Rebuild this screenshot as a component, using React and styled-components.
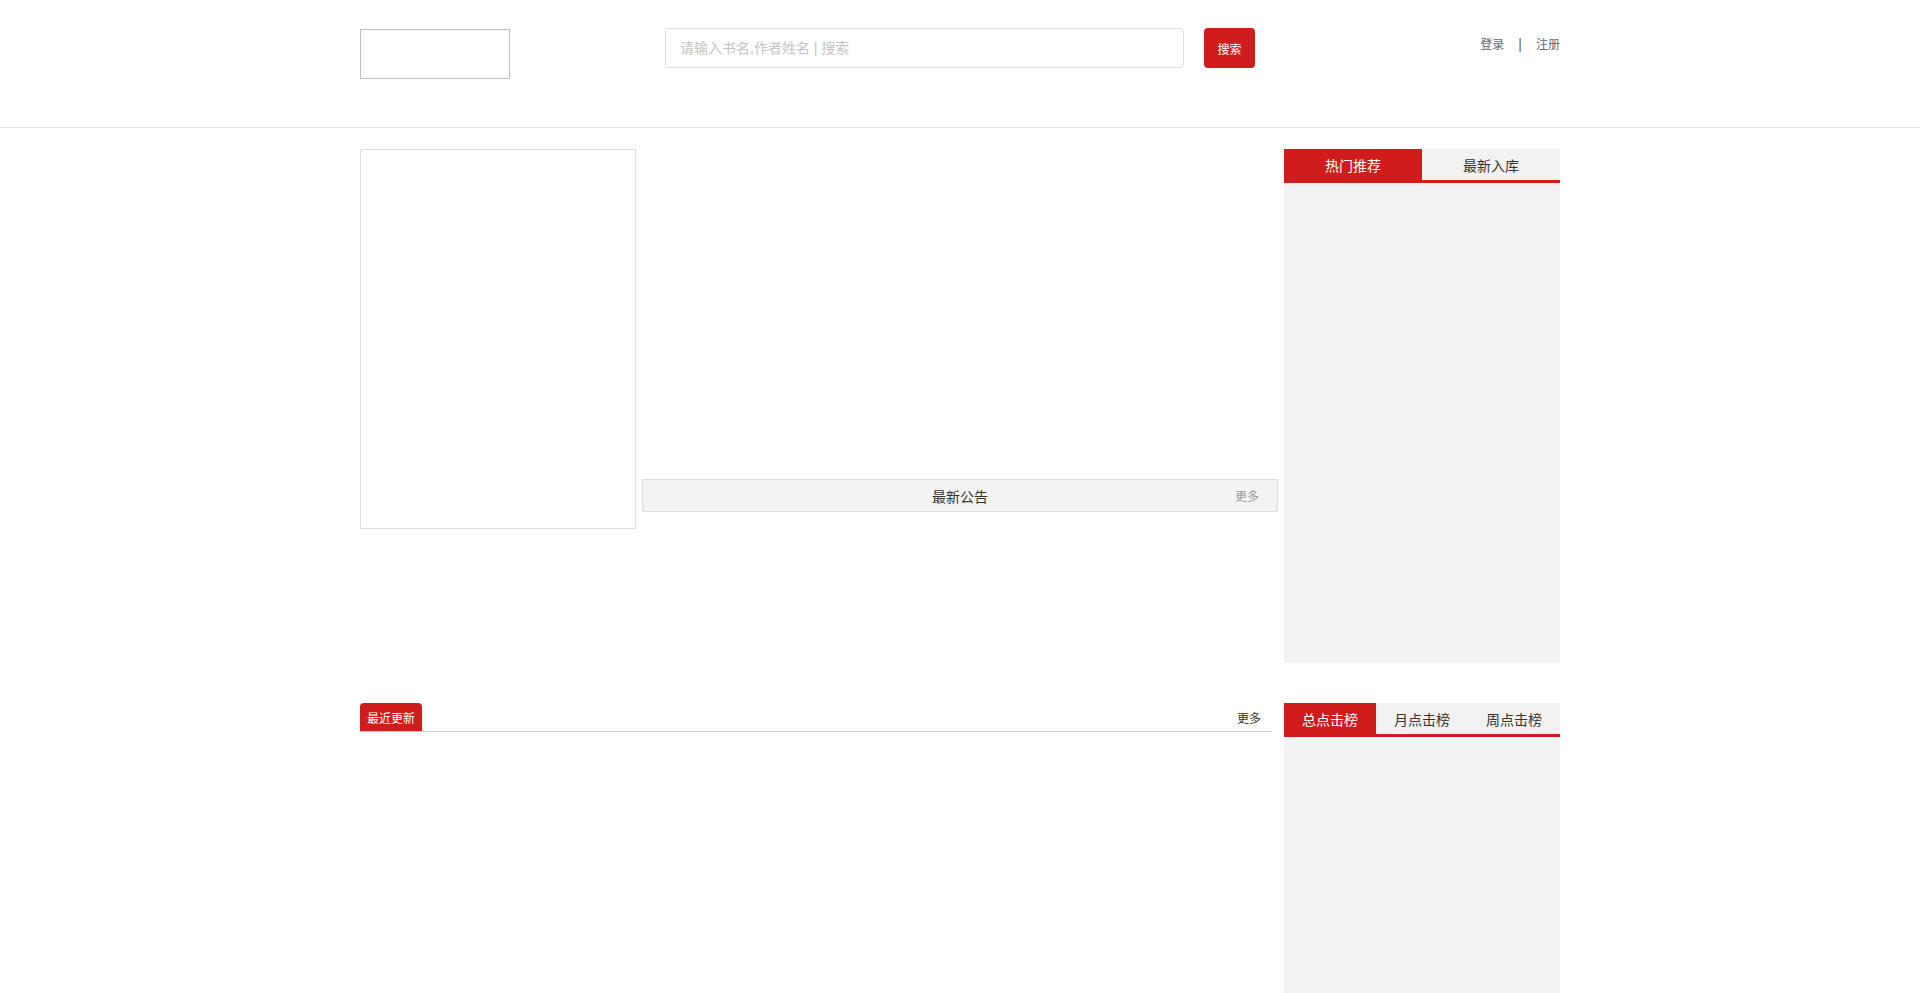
import React, { useState } from 'react';
import styled, { createGlobalStyle } from 'styled-components';

const GlobalStyle = createGlobalStyle`
  body {
    margin: 0;
    background: #fff;
    font-family: "Liberation Sans", Arial, "Noto Sans CJK SC", sans-serif;
    color: #333;
  }
  * {
    box-sizing: border-box;
  }
`;

const RED = '#d11c1c';

const App = () => {
    const [topTab, setTopTab] = useState(0);
    const [bottomTab, setBottomTab] = useState(0);

    return (
        <>
            <GlobalStyle />
            <Header>
                <HeaderInner>
                    <Logo />
                    <SearchForm onSubmit={e => e.preventDefault()}>
                        <SearchInput placeholder="请输入书名,作者姓名 | 搜索" />
                        <SearchButton type="submit">搜索</SearchButton>
                    </SearchForm>
                    <UserLinks>
                        <UserLink href="#">登录</UserLink>
                        <Divider>|</Divider>
                        <UserLink href="#">注册</UserLink>
                    </UserLinks>
                </HeaderInner>
            </Header>

            <Wrapper>
                <TopRow>
                    <Cover />
                    <Center>
                        <CenterBody />
                        <NoticeBar>
                            <NoticeTitle>最新公告</NoticeTitle>
                            <NoticeMore href="#">更多</NoticeMore>
                        </NoticeBar>
                    </Center>
                    <Side>
                        <Tabs>
                            {['热门推荐', '最新入库'].map((t, i) => (
                                <Tab key={t} $active={topTab === i} onClick={() => setTopTab(i)}>{t}</Tab>
                            ))}
                        </Tabs>
                        <SidePanel $height={480} />
                    </Side>
                </TopRow>

                <BottomRow>
                    <Main>
                        <SectionHead>
                            <SectionTab>最近更新</SectionTab>
                            <SectionMore href="#">更多</SectionMore>
                        </SectionHead>
                    </Main>
                    <Side>
                        <Tabs>
                            {['总点击榜', '月点击榜', '周点击榜'].map((t, i) => (
                                <Tab key={t} $active={bottomTab === i} onClick={() => setBottomTab(i)}>{t}</Tab>
                            ))}
                        </Tabs>
                        <SidePanel $height={420} />
                    </Side>
                </BottomRow>
            </Wrapper>
        </>
    );
};

const Header = styled.header`
  height: 128px;
  border-bottom: 1px solid #e5e5e5;
`;

const HeaderInner = styled.div`
  width: 1200px;
  margin: 0 auto;
  display: flex;
  align-items: flex-start;
`;

const Logo = styled.div`
  width: 150px;
  height: 50px;
  margin-top: 29px;
  border: 1px solid #bdbdbd;
`;

const SearchForm = styled.form`
  display: flex;
  margin: 28px 0 0 155px;
`;

const SearchInput = styled.input`
  width: 519px;
  height: 40px;
  padding: 0 14px;
  border: 1px solid #ddd;
  border-radius: 4px;
  font-size: 14px;
  font-family: inherit;
  outline: none;

  &::placeholder {
    color: #c4c4c4;
  }
`;

const SearchButton = styled.button`
  width: 51px;
  height: 40px;
  margin-left: 20px;
  border: none;
  border-radius: 4px;
  background: ${RED};
  color: #fff;
  font-size: 12px;
  font-family: inherit;
  cursor: pointer;
`;

const UserLinks = styled.div`
  margin: 35px 0 0 auto;
  display: flex;
  align-items: center;
  font-size: 12px;
  color: #666;
`;

const UserLink = styled.a`
  color: #666;
  text-decoration: none;
`;

const Divider = styled.span`
  margin: 0 14px;
  font-size: 14px;
`;

const Wrapper = styled.div`
  width: 1200px;
  margin: 21px auto 0;
`;

const TopRow = styled.div`
  display: flex;
  gap: 6px;
  align-items: flex-start;
`;

const Cover = styled.div`
  width: 276px;
  height: 380px;
  border: 1px solid #ddd;
`;

const Center = styled.div`
  width: 636px;
  display: flex;
  flex-direction: column;
`;

const CenterBody = styled.div`
  height: 330px;
`;

const NoticeBar = styled.div`
  position: relative;
  height: 33px;
  display: flex;
  align-items: center;
  justify-content: center;
  background: #f3f3f3;
  border: 1px solid #ddd;
`;

const NoticeTitle = styled.span`
  font-size: 14px;
  color: #333;
`;

const NoticeMore = styled.a`
  position: absolute;
  right: 18px;
  font-size: 12px;
  color: #999;
  text-decoration: none;
`;

const Side = styled.div`
  width: 276px;
  display: flex;
  flex-direction: column;
`;

const Tabs = styled.div`
  display: flex;
  border-bottom: 3px solid ${RED};
`;

const Tab = styled.div`
  flex: 1;
  height: 31px;
  display: flex;
  align-items: center;
  justify-content: center;
  font-size: 14px;
  cursor: pointer;
  background: ${p => (p.$active ? RED : '#f2f2f2')};
  color: ${p => (p.$active ? '#fff' : '#333')};
`;

const SidePanel = styled.div`
  height: ${p => p.$height}px;
  background: #f2f2f2;
`;

const BottomRow = styled.div`
  display: flex;
  gap: 12px;
  margin-top: 40px;
  align-items: flex-start;
`;

const Main = styled.div`
  width: 912px;
`;

const SectionHead = styled.div`
  height: 29px;
  display: flex;
  align-items: flex-end;
  justify-content: space-between;
  border-bottom: 1px solid #ccc;
`;

const SectionTab = styled.div`
  width: 62px;
  height: 28px;
  display: flex;
  align-items: center;
  justify-content: center;
  background: ${RED};
  border-radius: 4px 4px 0 0;
  color: #fff;
  font-size: 12px;
`;

const SectionMore = styled.a`
  align-self: center;
  margin-right: 11px;
  font-size: 12px;
  color: #333;
  text-decoration: none;
`;

export default App;
